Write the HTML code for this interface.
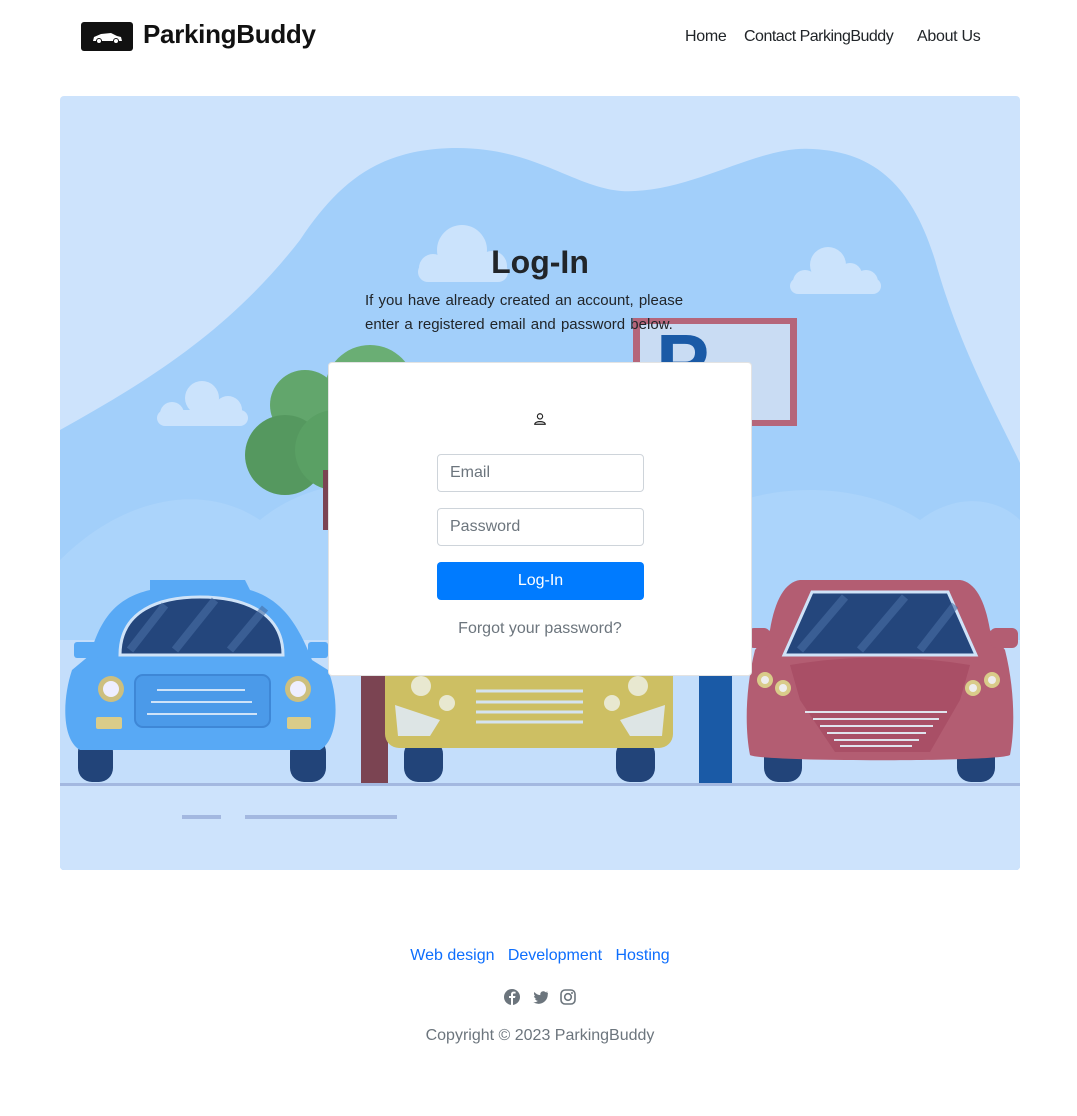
<!DOCTYPE html>
<html><head><meta charset="utf-8"><style>
*{margin:0;padding:0;box-sizing:border-box}
body{width:1077px;height:1116px;background:#fff;font-family:"Liberation Sans",sans-serif;color:#212529;position:relative;overflow:hidden}
.abs{position:absolute}
.nav a{position:absolute;top:28px;font-size:16px;color:#212529;text-decoration:none}
.input{position:absolute;left:437px;width:207px;height:38px;border:1px solid #ced4da;border-radius:4px;background:#fff;font-size:16px;color:#6c757d;padding:9px 12px}
</style></head><body>
<div class="abs" style="left:81px;top:22px;width:52px;height:29px;background:#111;border-radius:3px">
<svg width="52" height="29" viewBox="0 0 52 29"><path d="M12 19 L13 15 L20 12 L30 11 L36 14 L40 15 L41 19 Z" fill="#fff"/><circle cx="18" cy="19" r="2.5" fill="#fff" stroke="#111"/><circle cx="35" cy="19" r="2.5" fill="#fff" stroke="#111"/></svg></div>
<div class="abs" style="left:143px;top:19px;font-size:26px;font-weight:bold;color:#111;letter-spacing:-0.3px">ParkingBuddy</div>
<div class="nav"><a style="left:685px;letter-spacing:-0.3px">Home</a><a style="left:744px;letter-spacing:-0.5px">Contact ParkingBuddy</a><a style="left:917px;letter-spacing:-0.3px">About Us</a></div>

<div class="abs" style="left:60px;top:96px;width:960px;height:774px;border-radius:4px;overflow:hidden;background:#cde3fc">
<svg width="960" height="774" viewBox="60 96 960 774">
<path d="M60 430 C150 380 230 330 300 240 C340 180 380 150 452 148 C540 146 580 195 635 191 C700 188 760 145 813 149 C870 152 910 180 935 260 C960 350 1000 420 1020 463 L1020 870 L60 870 Z" fill="#a2cffa"/>
<path d="M60 560 C120 500 200 480 260 520 C320 470 420 470 480 520 L700 520 C760 480 860 480 920 520 C960 490 1000 500 1020 520 L1020 870 L60 870 Z" fill="#bcdcfb" opacity=".35"/>
<rect x="60" y="640" width="960" height="230" fill="#c4defb"/>
<rect x="60" y="786" width="960" height="84" fill="#cde3fc"/>
<g fill="#cbe3fc">
<circle cx="433" cy="268" r="14"/><circle cx="462" cy="250" r="25"/><circle cx="492" cy="266" r="15"/><rect x="418" y="262" width="90" height="20" rx="10"/>
<circle cx="805" cy="282" r="12"/><circle cx="828" cy="265" r="18"/><circle cx="850" cy="275" r="12"/><circle cx="866" cy="282" r="12"/><rect x="790" y="278" width="91" height="16" rx="8"/>
<circle cx="172" cy="414" r="12"/><circle cx="202" cy="398" r="17"/><circle cx="228" cy="410" r="14"/><rect x="157" y="410" width="91" height="16" rx="8"/>
</g>
<circle cx="370" cy="390" r="45" fill="#6aae74"/><circle cx="305" cy="405" r="35" fill="#62a66c"/><circle cx="285" cy="455" r="40" fill="#55985f"/><circle cx="335" cy="450" r="40" fill="#5aa064"/>
<rect x="323" y="470" width="8" height="60" fill="#7b4452"/>
<rect x="361" y="640" width="27" height="143" fill="#7b4452"/>
<rect x="633" y="318" width="164" height="108" fill="#b5667a"/><rect x="640" y="324" width="150" height="96" fill="#c9dcf3"/>
<text x="656" y="390" font-family="Liberation Sans" font-weight="bold" font-size="80" fill="#1a5aa6">P</text>
<rect x="699" y="670" width="33" height="113" fill="#1a5aa6"/>
<rect x="60" y="783" width="960" height="3" fill="#a3b8e0"/><rect x="182" y="815" width="39" height="4" fill="#a3b8e0"/><rect x="245" y="815" width="152" height="4" fill="#a3b8e0"/>
<!-- blue car -->
<rect x="78" y="738" width="35" height="44" rx="14" fill="#224479"/><rect x="290" y="738" width="36" height="44" rx="14" fill="#224479"/>
<path d="M150 580 L245 580 L250 590 C285 600 300 630 312 660 L328 670 C340 700 338 740 320 750 L80 750 C62 740 62 700 72 670 L90 655 C100 620 115 598 150 590 Z" fill="#58a9f5"/>
<rect x="74" y="642" width="26" height="16" rx="3" fill="#58a9f5"/><rect x="308" y="642" width="20" height="16" rx="3" fill="#58a9f5"/>
<path d="M120 655 C120 610 160 597 200 597 C240 597 283 610 283 655 Z" fill="#24467c" stroke="#cfe3f8" stroke-width="3"/>
<g stroke="#4a6fa5" stroke-width="8" opacity=".6"><line x1="130" y1="650" x2="165" y2="605"/><line x1="175" y1="650" x2="215" y2="600"/><line x1="230" y1="650" x2="265" y2="608"/></g>
<rect x="135" y="675" width="135" height="52" rx="8" fill="#4b9ae9" stroke="#3e87d6" stroke-width="2"/>
<g stroke="#cfe3f8" stroke-width="2"><line x1="157" y1="690" x2="245" y2="690"/><line x1="151" y1="702" x2="252" y2="702"/><line x1="147" y1="714" x2="257" y2="714"/></g>
<circle cx="111" cy="689" r="13" fill="#cdbf7e"/><circle cx="111" cy="689" r="8" fill="#eef"/><circle cx="298" cy="689" r="13" fill="#cdbf7e"/><circle cx="298" cy="689" r="8" fill="#eef"/>
<rect x="96" y="717" width="26" height="12" rx="2" fill="#d9cc8a"/><rect x="287" y="717" width="24" height="12" rx="2" fill="#d9cc8a"/>
<!-- yellow car -->
<rect x="404" y="740" width="39" height="42" rx="14" fill="#224479"/><rect x="616" y="740" width="39" height="42" rx="14" fill="#224479"/>
<rect x="385" y="650" width="288" height="98" rx="14" fill="#cdbf63"/>
<g stroke="#d5e3ef" stroke-width="3"><line x1="476" y1="691" x2="583" y2="691"/><line x1="476" y1="702" x2="583" y2="702"/><line x1="476" y1="712" x2="583" y2="712"/><line x1="476" y1="722" x2="583" y2="722"/></g>
<path d="M395 705 L440 720 L430 736 L398 736 Z" fill="#dde5e5"/><path d="M665 705 L620 720 L630 736 L662 736 Z" fill="#dde5e5"/>
<circle cx="421" cy="686" r="10" fill="#e8e8d0"/><circle cx="447" cy="703" r="8" fill="#e8e8d0"/><circle cx="638" cy="686" r="10" fill="#e8e8d0"/><circle cx="612" cy="703" r="8" fill="#e8e8d0"/>
<!-- red car -->
<rect x="764" y="740" width="38" height="42" rx="14" fill="#224479"/><rect x="957" y="740" width="38" height="42" rx="14" fill="#224479"/>
<path d="M800 580 L960 580 C975 582 985 600 990 630 L1005 650 C1015 690 1015 730 1010 755 C1000 762 760 762 750 755 C745 730 745 690 755 650 L770 630 C775 600 785 582 800 580 Z" fill="#b35d72"/>
<rect x="748" y="628" width="22" height="20" rx="6" fill="#b35d72"/><rect x="990" y="628" width="28" height="20" rx="6" fill="#b35d72"/>
<path d="M812 592 L948 592 L976 655 L784 655 Z" fill="#24467c" stroke="#cfe3f8" stroke-width="3"/>
<g stroke="#4a6fa5" stroke-width="8" opacity=".6"><line x1="800" y1="650" x2="845" y2="597"/><line x1="860" y1="650" x2="905" y2="597"/><line x1="920" y1="650" x2="955" y2="605"/></g>
<path d="M790 665 C850 655 910 655 970 665 L960 700 L800 700 Z" fill="#a94f66"/>
<path d="M800 700 L960 700 L930 752 L835 752 Z" fill="#a94f66"/>
<g stroke="#e0e4ee" stroke-width="2"><line x1="805" y1="712" x2="947" y2="712"/><line x1="813" y1="719" x2="939" y2="719"/><line x1="820" y1="726" x2="933" y2="726"/><line x1="827" y1="733" x2="926" y2="733"/><line x1="834" y1="740" x2="919" y2="740"/><line x1="840" y1="746" x2="912" y2="746"/></g>
<circle cx="765" cy="680" r="8" fill="#d9cc8a"/><circle cx="783" cy="688" r="8" fill="#d9cc8a"/><circle cx="992" cy="680" r="8" fill="#d9cc8a"/><circle cx="973" cy="688" r="8" fill="#d9cc8a"/>
<circle cx="765" cy="680" r="4" fill="#eee"/><circle cx="783" cy="688" r="4" fill="#eee"/><circle cx="992" cy="680" r="4" fill="#eee"/><circle cx="973" cy="688" r="4" fill="#eee"/>
</svg>
</div>

<div class="abs" style="left:0;width:1080px;top:244px;text-align:center;font-size:32px;font-weight:bold;color:#212529">Log-In</div>
<div class="abs" style="left:365px;top:289px;width:340px;font-size:15px;line-height:24px;color:#212529;word-spacing:1px">If you have already created an account, please enter a registered email and password below.</div>

<div class="abs" style="left:328px;top:362px;width:424px;height:314px;background:#fff;border-radius:4px;border:1px solid #e3e3e3"></div>
<svg class="abs" style="left:533px;top:412px" width="14" height="14" viewBox="0 0 16 16"><circle cx="8" cy="5" r="3" fill="none" stroke="#222" stroke-width="1.3"/><path d="M2 14 C2 10 14 10 14 14 Z" fill="none" stroke="#222" stroke-width="1.3"/></svg>
<div class="input" style="top:454px">Email</div>
<div class="input" style="top:508px">Password</div>
<div class="abs" style="left:437px;top:562px;width:207px;height:38px;background:#007bff;border-radius:4px;color:#fff;font-size:16px;text-align:center;line-height:38px">Log-In</div>
<div class="abs" style="left:0;width:1080px;top:620px;text-align:center;font-size:16px;color:#6c757d">Forgot your password?</div>

<div class="abs" style="left:0;width:1080px;top:947px;text-align:center;font-size:16px;color:#0d6efd"><span>Web design</span>&nbsp;&nbsp;&nbsp;<span>Development</span>&nbsp;&nbsp;&nbsp;<span>Hosting</span></div>
<svg class="abs" style="left:503px;top:988px" width="82" height="18" viewBox="0 0 82 18">
<circle cx="9" cy="9" r="8" fill="#6c757d"/><path d="M10 17 V10 H12 L12.5 8 H10 V6.5 C10 5.8 10.3 5.5 11 5.5 H12.6 V3.8 C12 3.7 11.3 3.6 10.7 3.6 C9 3.6 8 4.6 8 6.3 V8 H6 V10 H8 V17 Z" fill="#fff"/>
<path d="M45 4.5 C44.4 4.8 43.8 4.9 43.2 5 C43.8 4.6 44.3 4 44.5 3.4 C43.9 3.8 43.2 4 42.5 4.2 C41.3 2.9 39 3 37.9 4.4 C37.3 5.2 37.1 6.2 37.4 7.1 C35 7 32.8 5.9 31.4 4 C30.6 5.4 31 7.2 32.3 8.1 C31.8 8.1 31.4 8 31 7.7 C31 9.2 32 10.4 33.4 10.7 C33 10.8 32.5 10.9 32 10.8 C32.4 12 33.6 12.9 34.9 12.9 C33.6 14 31.8 14.5 30.2 14.3 C37 18.3 45 14 44.8 6 C44.9 5.6 45 5 45 4.5 Z" fill="#6c757d"/>
<rect x="58" y="2" width="14" height="14" rx="4" fill="none" stroke="#6c757d" stroke-width="1.6"/><circle cx="65" cy="9" r="3.3" fill="none" stroke="#6c757d" stroke-width="1.6"/><circle cx="69" cy="5" r="1" fill="#6c757d"/>
</svg>
<div class="abs" style="left:0;width:1080px;top:1027px;text-align:center;font-size:16px;color:#6c757d">Copyright © 2023 ParkingBuddy</div>
</body></html>
